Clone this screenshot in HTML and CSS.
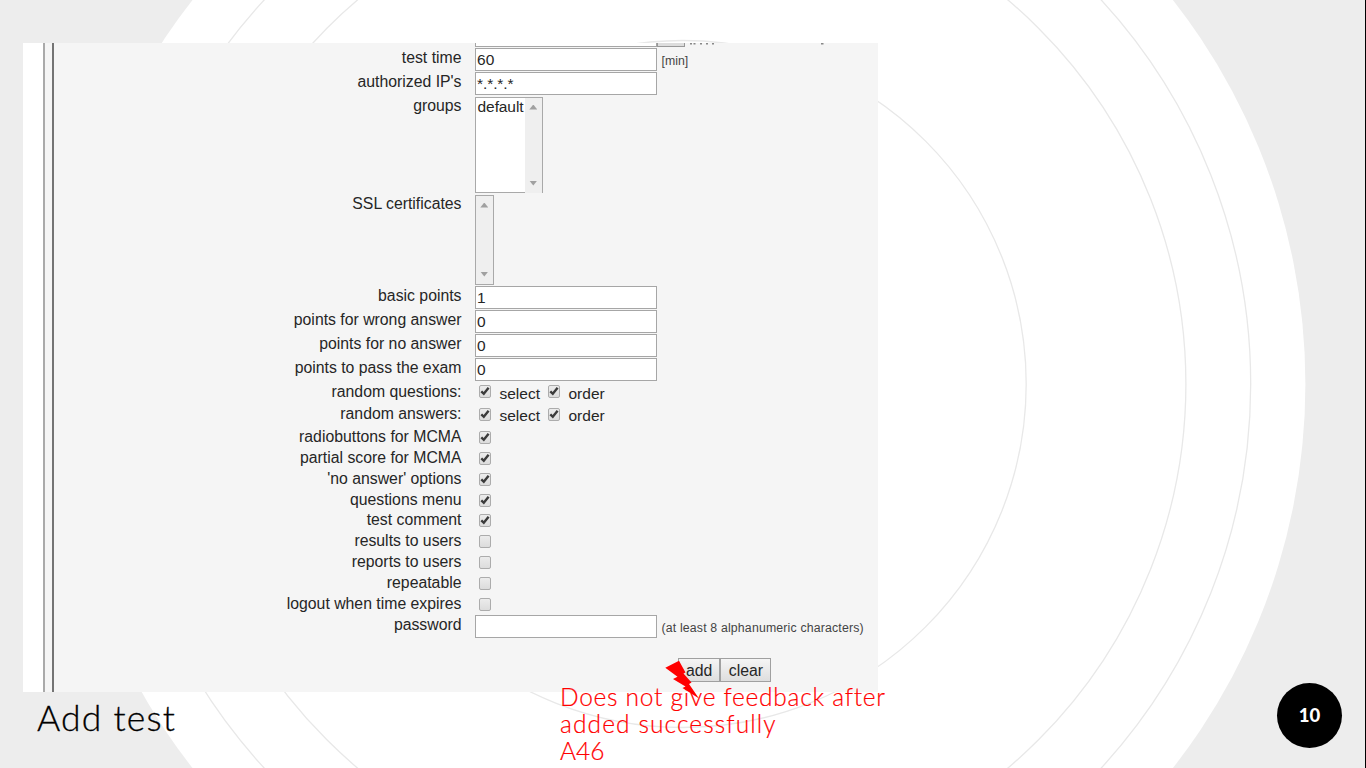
FILE: index.html
```html
<!DOCTYPE html>
<html lang="en">
<head>
<meta charset="utf-8">
<title>Add test</title>
<link rel="stylesheet" href="styles.css">
</head>
<body>
<main class="slide">
  <svg class="rings" viewBox="0 0 1366 768" aria-hidden="true">
    <circle class="disc" cx="682.7" cy="384" r="622.7"/>
    <circle class="ring" cx="682.7" cy="384" r="568"/>
    <circle class="ring" cx="682.7" cy="384" r="503.2"/>
    <circle class="ring" cx="682.7" cy="384" r="343.5"/>
  </svg>
  <svg width="0" height="0" class="defs" aria-hidden="true">
    <symbol id="tick" viewBox="0 0 12 12"><path d="M2.3 6.4 4.8 8.8 9.6 2.8" fill="none" stroke="#3b3b3b" stroke-width="2.4"/></symbol>
  </svg>

  <section class="panel">
    <div class="frame">
      <div class="form">
        <div class="row cut"><span class="label"></span><span class="field"></span><span class="stub"></span>
          <svg class="scraps" width="140" height="3" viewBox="0 0 140 3"><path d="M1 0h2v1.5H1zM4.500 0h2v1.500h-2zM11 0h2v1.500h-2zM17 0h2v1.500h-2zM23 0h2v1.500h-2zM132 0h2.500v1.500h-2.500z" fill="#888"/></svg></div>
        <div class="row"><span class="label">test time</span><span class="field">60</span><span class="hint">[min]</span></div>
        <div class="row"><span class="label">authorized IP's</span><span class="field stars">*.*.*.*</span></div>
        <div class="row groups"><span class="label">groups</span><span class="list"><span class="option">default</span><span class="bar"><i class="up"></i><i class="down"></i></span></span></div>
        <div class="row certs"><span class="label">SSL certificates</span><span class="list"><span class="bar"><i class="up"></i><i class="down"></i></span></span></div>
        <div class="row"><span class="label">basic points</span><span class="field">1</span></div>
        <div class="row"><span class="label">points for wrong answer</span><span class="field">0</span></div>
        <div class="row"><span class="label">points for no answer</span><span class="field">0</span></div>
        <div class="row"><span class="label">points to pass the exam</span><span class="field">0</span></div>
        <div class="row pair"><span class="label">random questions:</span><span class="box"><svg><use href="#tick"/></svg></span><span class="choice">select</span><span class="box"><svg><use href="#tick"/></svg></span><span class="choice">order</span></div>
        <div class="row pair"><span class="label">random answers:</span><span class="box"><svg><use href="#tick"/></svg></span><span class="choice">select</span><span class="box"><svg><use href="#tick"/></svg></span><span class="choice">order</span></div>
        <div class="row check"><span class="label">radiobuttons for MCMA</span><span class="box"><svg><use href="#tick"/></svg></span></div>
        <div class="row check"><span class="label">partial score for MCMA</span><span class="box"><svg><use href="#tick"/></svg></span></div>
        <div class="row check"><span class="label">'no answer' options</span><span class="box"><svg><use href="#tick"/></svg></span></div>
        <div class="row check"><span class="label">questions menu</span><span class="box"><svg><use href="#tick"/></svg></span></div>
        <div class="row check"><span class="label">test comment</span><span class="box"><svg><use href="#tick"/></svg></span></div>
        <div class="row check"><span class="label">results to users</span><span class="box"></span></div>
        <div class="row check"><span class="label">reports to users</span><span class="box"></span></div>
        <div class="row check"><span class="label">repeatable</span><span class="box"></span></div>
        <div class="row check"><span class="label">logout when time expires</span><span class="box"></span></div>
        <div class="row"><span class="label">password</span><span class="field"></span><span class="hint long">(at least 8 alphanumeric characters)</span></div>
        <div class="actions"><span class="button add">add</span><span class="button clear">clear</span></div>
      </div>
    </div>
  </section>

  <footer class="footer">
    <h1 class="title">Add test</h1>
    <p class="note"><span class="line one">Does not give feedback after</span><span class="line two">added successfully</span><span class="line three">A46</span></p>
    <span class="badge">10</span>
  </footer>
  <svg class="bolt" viewBox="0 0 36 40" aria-hidden="true"><path d="M.3 7.800 14 .8 20.500 12.500 18.500 13.500 26.500 22.500 24 24 34 38.500 17.500 28 20.500 26.500 8 19 12.500 16.800Z" fill="#f00"/></svg>
</main>
</body>
</html>
```
FILE: styles.css
```css
* { box-sizing: border-box; }
body { margin: 0; }
.slide {
  position: relative;
  display: flex;
  flex-direction: column;
  width: 1366px;
  height: 768px;
  padding: 42.6px 0 0 23px;
  overflow: hidden;
  background: #ededed;
  border-right: 1px solid #000;
  font-family: "Liberation Sans", Arial, sans-serif;
}
.rings { position: absolute; left: 0; top: 0; width: 1366px; height: 768px; }
.defs { position: absolute; }
.disc { fill: #fff; }
.ring { fill: none; stroke: #e8e8e8; stroke-width: 1.3; }

.panel {
  position: relative;
  flex: none;
  width: 855.4px;
  height: 649.4px;
  padding-left: 20px;
  background: #fff;
  overflow: hidden;
}
.frame { display: flow-root; height: 100%; padding-left: 7px; background: #f5f5f5; border-left: 2px solid #aaa; }
.form {
  margin-top: -19px;
  border-left: 2px solid #747474;
  background: #f5f5f5;
  height: 669px;
  color: #262626;
  font-size: 15.8px;
}
.row { display: flex; height: 24px; align-items: flex-start; }
.label { width: 407.5px; flex: none; line-height: 20px; text-align: right; white-space: nowrap; }
.field {
  flex: none;
  width: 182.4px;
  height: 23px;
  margin: 0.2px 0 0 13.1px;
  padding-left: 1.5px;
  border: 1px solid #a6a6a6;
  background: #fff;
  font-size: 15.5px;
  line-height: 22px;
}
.stars { letter-spacing: -0.1px; }
.stub { width: 28px; height: 23px; border: 1px solid #999; background: #ddd; }
.scraps { margin: 19px 0 0 4px; }
.hint { margin-left: 4.5px; font-size: 12.3px; line-height: 26px; color: #444; white-space: nowrap; }
.long { letter-spacing: 0.17px; }
.list {
  display: flex;
  margin: 1px 0 0 13.1px;
  height: 96px;
  width: 68.4px;
  border: 1px solid #a9a9a9;
  background: #fff;
}
.groups { height: 98px; }
.certs { height: 92px; }
.certs .list { width: 19.4px; height: 90px; }
.option { width: 49px; padding-left: 2px; line-height: 17px; font-size: 15.5px; letter-spacing: -0.1px; }
.groups .list { border-bottom: 0; background: linear-gradient(#a9a9a9, #a9a9a9) 0 100% / 49px 1px no-repeat #fff; }
.bar { flex: 1; display: flex; flex-direction: column; justify-content: space-between; align-items: center; padding: 7px 0 7px; background: #efefef; }
.up, .down { width: 8px; height: 5px; background: #a0a0a0; }
.up { clip-path: polygon(50% 0, 100% 100%, 0 100%); }
.down { clip-path: polygon(0 0, 100% 0, 50% 100%); }
.box {
  flex: none;
  width: 12px;
  height: 13px;
  margin: 4px 0 0 17px;
  border: 1px solid #acacac;
  border-radius: 2px;
  background: linear-gradient(#ececec, #dcdcdc);
}
.box svg { display: block; width: 12px; height: 12px; margin: -1px; }
.pair { height: 22.7px; }
.pair .box { margin-top: 3.4px; }
.pair .choice { margin-left: 9px; line-height: 23.5px; width: 39px; font-size: 15.5px; }
.pair .choice + .box { margin-left: 9px; }
.check { height: 20.87px; }
.actions { display: flex; padding: 19px 0 0 624px; }
.button {
  height: 24px;
  border: 1px solid #a0a0a0;
  background: linear-gradient(#f5f5f5, #dedede);
  text-align: center;
  line-height: 23px;
  font-size: 15.8px;
}
.add { width: 42.4px; }
.clear { width: 51px; }

.footer {
  position: relative;
  display: flex;
  align-items: flex-start;
  margin-top: -8.6px;
  padding-left: 14px;
  font-family: Lato, sans-serif;
  font-weight: 300;
}
.title { width: 523px; margin: 14px 0 0; font-size: 35.5px; line-height: 42px; font-weight: 300; letter-spacing: 1.2px; color: #000; -webkit-text-stroke: 0.3px #000; }
.note { width: 717px; margin: 0; color: #f00; font-size: 24.5px; line-height: 27px; -webkit-text-stroke: 0.2px #f00; }
.line { display: block; }
.one { letter-spacing: 0.73px; }
.two { letter-spacing: 1.1px; }
.badge {
  width: 65px;
  height: 65px;
  border-radius: 50%;
  background: #000;
  color: #fff;
  font-size: 18.5px;
  font-weight: 900;
  line-height: 65px;
  text-align: center;
}
.bolt { position: absolute; left: 665px; top: 660px; width: 36px; height: 40px; }
```
